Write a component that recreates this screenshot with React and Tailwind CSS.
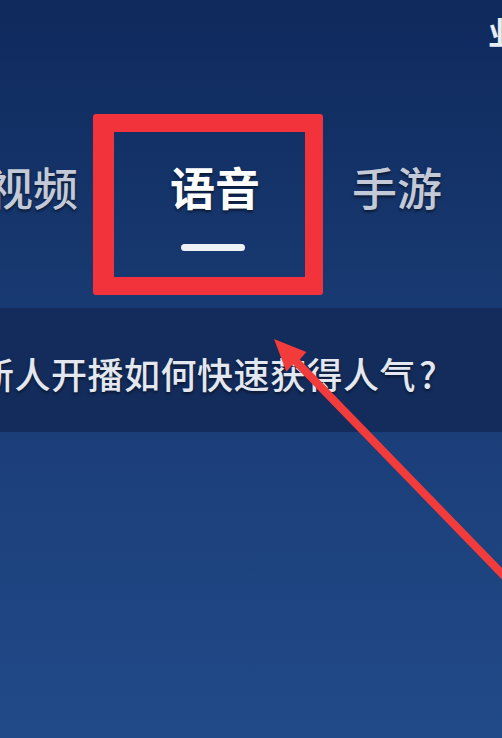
/* Live tabs screenshot with red annotation */

const FONT = { fontFamily: '"Noto Sans CJK SC", "Noto Sans", sans-serif' };

function Tab({ label, active }) {
  return (
    <div className="flex flex-col items-center shrink-0">
      <div
        className={`text-[45px] leading-none whitespace-nowrap [text-shadow:0_2px_3px_rgba(0,0,0,0.55)] ${
          active ? "font-bold text-white" : "font-medium text-[#c3c9d6]"
        }`}
      >
        {label}
      </div>
      <div className={`mt-[35px] h-[7px] w-[64px] rounded-full -ml-1 ${active ? "bg-[#eef1f6]" : "bg-transparent"}`} />
    </div>
  );
}

export default function App() {
  return (
    <div className="relative w-[502px] h-[738px] overflow-hidden flex flex-col bg-[#1d437f]" style={FONT}>
      {/* Header with tabs */}
      <div className="h-[308px] shrink-0 flex flex-col bg-gradient-to-b from-[#0f295c] to-[#183a72]">
        <div className="h-[60px] relative">
          <div className="absolute left-[488px] top-[15px] text-[32px] leading-none font-bold text-[#e8ecf3]">业</div>
        </div>
        <div className="mt-[104px] -ml-[12px] flex items-start gap-[92px]">
          <Tab label="视频" />
          <Tab label="语音" active />
          <Tab label="手游" />
        </div>
      </div>

      {/* Notice band */}
      <div className="h-[124px] shrink-0 flex items-center bg-[#132c5c]">
        <div className="-ml-[22px] mt-[6px] text-[36px] leading-none tracking-[0.5px] whitespace-nowrap font-medium text-[#e3e7ef] [text-shadow:0_2px_3px_rgba(0,0,0,0.5)]">
          新人开播如何快速获得人气<span className="ml-[3px]">?</span>
        </div>
      </div>

      {/* Rest */}
      <div className="flex-1 bg-gradient-to-b from-[#1b3e79] to-[#214a88]" />

      {/* Annotation: red box */}
      <div className="absolute left-[93px] top-[114px] w-[230px] h-[181px] border-[18px] border-l-[21px] border-[#f2333b] rounded-[3px]" />

      {/* Annotation: red arrow */}
      <svg className="absolute inset-0 pointer-events-none" width="502" height="738" viewBox="0 0 502 738">
        <polygon
          points="274,339 306.4,352.1 299.8,359.6 512.9,579.2 507.1,584.8 293,364.2 286.4,371.7"
          fill="#f23b3b"
        />
      </svg>
    </div>
  );
}
